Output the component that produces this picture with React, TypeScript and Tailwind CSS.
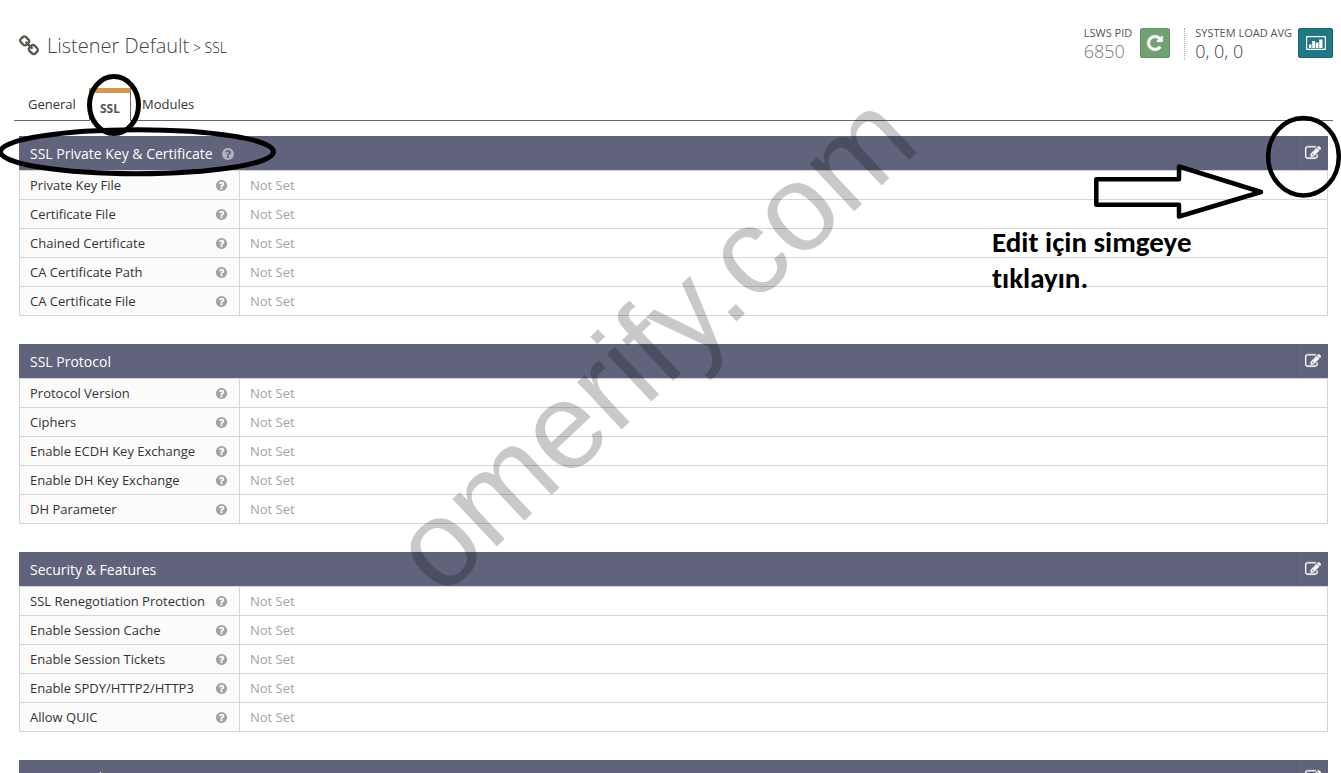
import React from "react";

type IconProps = { path: string; className: string };

const ICON = {
  link: "M1520 1216q0-40-28-68l-208-208q-28-28-68-28-42 0-72 32 3 3 19 18.500t21.500 21.500 15 19 13 25.500 3.500 27.500q0 40-28 68t-68 28q-15 0-27.500-3.500t-25.500-13-19-15-21.500-21.500-18.500-19q-33 31-33 73 0 40 28 68l206 207q27 27 68 27 40 0 68-26l147-146q28-28 28-67zm-703-705q0-40-28-68l-206-207q-28-28-68-28-39 0-68 27l-147 146q-28 28-28 67 0 40 28 68l208 208q27 27 68 27 42 0 72-31-3-3-19-18.500t-21.500-21.500-15-19-13-25.500-3.500-27.500q0-40 28-68t68-28q15 0 27.500 3.500t25.500 13 19 15 21.500 21.500 18.500 19q33-31 33-73zm895 705q0 120-85 203l-147 146q-83 83-203 83-121 0-204-85l-206-207q-83-83-83-203 0-123 88-209l-88-88q-86 88-208 88-120 0-204-84l-208-208q-84-84-84-204t85-203l147-146q83-83 203-83 121 0 204 85l206 207q83 83 83 203 0 123-88 209l88 88q86-88 208-88 120 0 204 84l208 208q84 84 84 204z",
  help: "M1024 1376v-192q0-14-9-23t-23-9h-192q-14 0-23 9t-9 23v192q0 14 9 23t23 9h192q14 0 23-9t9-23zm256-672q0-88-55.500-163t-138.500-116-170-41q-243 0-371 213-15 24 8 42l132 100q7 6 19 6 16 0 25-12 53-68 86-92 34-24 86-24 48 0 85.500 26t37.500 59q0 38-20 61t-68 45q-63 28-115.500 86.500t-52.500 125.500v36q0 14 9 23t23 9h192q14 0 23-9t9-23q0-19 21.500-49.500t54.500-49.500q32-18 49-28.500t46-35 44.500-48 28-60.500 12.500-81zm384 192q0 209-103 385.500t-279.500 279.500-385.500 103-385.500-103-279.500-279.500-103-385.500 103-385.500 279.500-279.500 385.500-103 385.500 103 279.500 279.500 103 385.500z",
  edit: "M888 1184l116-116-152-152-116 116v56h96v96h56zm440-720q-16-16-33 1l-350 350q-17 17-1 33t33-1l350-350q17-17 1-33zm80 594v190q0 119-84.500 203.500t-203.500 84.500h-832q-119 0-203.500-84.500t-84.500-203.500v-832q0-119 84.500-203.500t203.500-84.500h832q63 0 117 25 15 7 18 23 3 17-9 29l-49 49q-14 14-32 8-23-6-45-6h-832q-66 0-113 47t-47 113v832q0 66 47 113t113 47h832q66 0 113-47t47-113v-126q0-13 9-22l64-64q15-15 35-7t20 29zm-96-738l288 288-672 672h-288v-288zm444 132l-92 92-288-288 92-92q28-28 68-28t68 28l152 152q28 28 28 68t-28 68z",
  repeat: "M1664 256v448q0 26-19 45t-45 19h-448q-42 0-59-40-17-39 14-69l138-138q-148-137-349-137-104 0-198.500 40.500t-163.500 109.500-109.500 163.500-40.500 198.500 40.500 198.500 109.500 163.500 163.500 109.500 198.500 40.500q119 0 225-52t179-147q7-10 23-12 15 0 25 9l137 138q9 8 9.500 20.500t-7.500 22.500q-109 132-264 204.500t-327 72.500q-156 0-298-61t-245-164-164-245-61-298 61-298 164-245 245-164 298-61q147 0 284.500 55.500t244.500 156.500l130-129q29-31 70-14 39 17 39 59z",
};

function Icon({ path, className }: IconProps) {
  return (
    <svg viewBox="0 0 1792 1792" fill="currentColor" aria-hidden="true" className={className}>
      <path d={path} />
    </svg>
  );
}

function ChartIcon() {
  return (
    <svg viewBox="0 0 20 16" fill="currentColor" aria-hidden="true" className="h-4 w-5">
      <path fillRule="evenodd" d="M1 1h18Q20 1 20 2v12q0 1-1 1H1Q0 15 0 14V2Q0 1 1 1zM1.200 2.200v11.600h17.600V2.200z" />
      <path d="M3 9.500h2.500V13H3zM6.200 6h2.800v7H6.200zM9.700 7.500h2.800V13H9.700zM13.200 4.500h3.300V13h-3.300z" />
    </svg>
  );
}

const sections = [
  {
    title: "SSL Private Key & Certificate",
    help: true,
    rows: ["Private Key File", "Certificate File", "Chained Certificate", "CA Certificate Path", "CA Certificate File"],
  },
  {
    title: "SSL Protocol",
    help: false,
    rows: ["Protocol Version", "Ciphers", "Enable ECDH Key Exchange", "Enable DH Key Exchange", "DH Parameter"],
  },
  {
    title: "Security & Features",
    help: false,
    rows: [
      "SSL Renegotiation Protection",
      "Enable Session Cache",
      "Enable Session Tickets",
      "Enable SPDY/HTTP2/HTTP3",
      "Allow QUIC",
    ],
  },
  { title: "OCSP Stapling", help: false, rows: [] },
];

function Section({ title, help, rows }: (typeof sections)[number]) {
  return (
    <section>
      <header className="flex h-[34px] items-stretch justify-between bg-[#60637b] text-white">
        <h2 className="flex items-center gap-2 pt-0.5 pl-[11px] text-sm">
          {title}
          {help && (
            <button type="button" aria-label={"Help: " + title} className="text-[#b0b2bd]">
              <Icon path={ICON.help} className="size-[14px]" />
            </button>
          )}
        </h2>
        <button
          type="button"
          aria-label={"Edit " + title}
          className="flex w-[31px] items-center justify-center border-l border-[#565970]"
        >
          <Icon path={ICON.edit} className="size-4 stroke-white stroke-[40]" />
        </button>
      </header>
      {rows.length > 0 && (
        <table className="w-full border-separate border-spacing-0 border-t border-l border-[#d5d5d5] text-[13px] leading-5">
          <tbody>
            {rows.map((label) => (
              <tr key={label}>
                <th
                  scope="row"
                  className="h-[29px] w-[220px] border-r border-b border-[#d5d5d5] bg-[#fbfbfb] p-0 pr-[11px] pl-[10px] text-left font-normal text-[#333]"
                >
                  <div className="flex items-center justify-between">
                    <span className="whitespace-nowrap">{label}</span>
                    <button type="button" aria-label={"Help: " + label} className="text-[#a0a2a8]">
                      <Icon path={ICON.help} className="size-[13px]" />
                    </button>
                  </div>
                </th>
                <td className="border-r border-b border-[#d5d5d5] p-0 pl-[10px] text-[#a3a3a8]">Not Set</td>
              </tr>
            ))}
          </tbody>
        </table>
      )}
    </section>
  );
}

export default function App() {
  return (
    <div className="h-screen overflow-y-auto bg-white font-['Open_Sans','Noto_Sans',sans-serif] text-[#333] [scrollbar-width:none]">
      <div className="relative overflow-hidden pt-6 pb-7">
        <header className="flex items-start justify-between pr-2 pl-[18px]">
          <h1 className="flex items-center gap-[7px] pt-2 font-light text-[#444]">
            <Icon path={ICON.link} className="size-[22px] text-[#57584c]" />
            <span className="text-xl leading-7">
              Listener Default<span className="text-sm text-[#222]"> &gt; SSL</span>
            </span>
          </h1>
          <div className="flex items-start">
            <div className="flex gap-2">
              <div className="flex flex-col">
                <span className="text-[11px] leading-[18px] text-[#555]">LSWS PID</span>
                <span className="text-lg leading-[18px] font-light text-[#777]">6850</span>
              </div>
              <button
                type="button"
                aria-label="Restart"
                className="mt-1 flex size-[30px] items-center justify-center rounded-xs border border-[#659265] bg-[#71a173] text-white"
              >
                <Icon path={ICON.repeat} className="size-[18px] stroke-white stroke-[60]" />
              </button>
            </div>
            <div className="mt-1 ml-[14px] h-8 border-l border-dotted border-[#aaa]" />
            <div className="flex gap-[6px] pl-[10px]">
              <div className="flex flex-col">
                <span className="text-[11px] leading-[18px] text-[#555]">SYSTEM LOAD AVG</span>
                <span className="text-lg leading-[18px] font-light text-[#403a4c]">0, 0, 0</span>
              </div>
              <button
                type="button"
                aria-label="Load graph"
                className="mt-1 flex h-[30px] w-[35px] items-center justify-center rounded-xs border border-[#1b6772] bg-[#217783] text-white"
              >
                <ChartIcon />
              </button>
            </div>
          </div>
        </header>

        <nav className="mt-7 mr-2 ml-[14px] flex h-[33px] items-end border-b border-[#666] text-[13px]">
          <a href="#general" className="flex h-8 w-[75px] items-center pt-0.5 pl-[14px]">
            General
          </a>
          <a
            href="#ssl"
            aria-current="page"
            className="-mb-px flex h-[33px] w-[42px] items-center justify-center border-x border-t-[5px] border-x-[#666] border-t-[#d8964e] bg-white pt-1 text-xs font-bold text-[#555]"
          >
            SSL
          </a>
          <a href="#modules" className="flex h-8 items-center pt-0.5 pl-[11px]">
            Modules
          </a>
        </nav>

        <main className="mt-[15px] mr-[13px] ml-[19px] flex flex-col gap-7">
          {sections.map((s) => (
            <Section key={s.title} {...s} />
          ))}
        </main>

        <svg
          viewBox="0 0 280 180"
          aria-hidden="true"
          className="pointer-events-none absolute top-0 left-0 h-[180px] w-[280px]"
          fill="none"
          stroke="#000"
          strokeWidth="5"
        >
          <ellipse cx="114" cy="105" rx="24.500" ry="28.500" />
          <ellipse cx="137" cy="151.700" rx="136.500" ry="22" />
        </svg>
        <svg
          viewBox="0 0 260 120"
          aria-hidden="true"
          className="pointer-events-none absolute top-[110px] right-0 h-[120px] w-[260px]"
          fill="none"
          stroke="#000"
          strokeWidth="4.500"
          strokeLinejoin="round"
        >
          <ellipse cx="222.500" cy="46.700" rx="35.300" ry="38.700" />
          <path d="M15.300 69.300H98V56.500L180 82 98 106.500V94.700H15.300z" />
        </svg>
        <p className="pointer-events-none absolute top-[224px] right-[119px] w-[230px] font-['Carlito','Lato',sans-serif] text-[29px] leading-9 font-bold text-black [font-variant-ligatures:none]">
          Edit için simgeye tıklayın.
        </p>
        <svg
          viewBox="0 0 540 520"
          className="pointer-events-none absolute top-[90px] left-1/2 -ml-[270px] h-[520px] w-[540px] overflow-visible"
        >
          <text
            transform="translate(40 509) rotate(-43.200)"
            className="fill-black/21 font-['Liberation_Sans',Arial,sans-serif] text-[123px]"
          >
            omerify.com
          </text>
        </svg>
      </div>
    </div>
  );
}
